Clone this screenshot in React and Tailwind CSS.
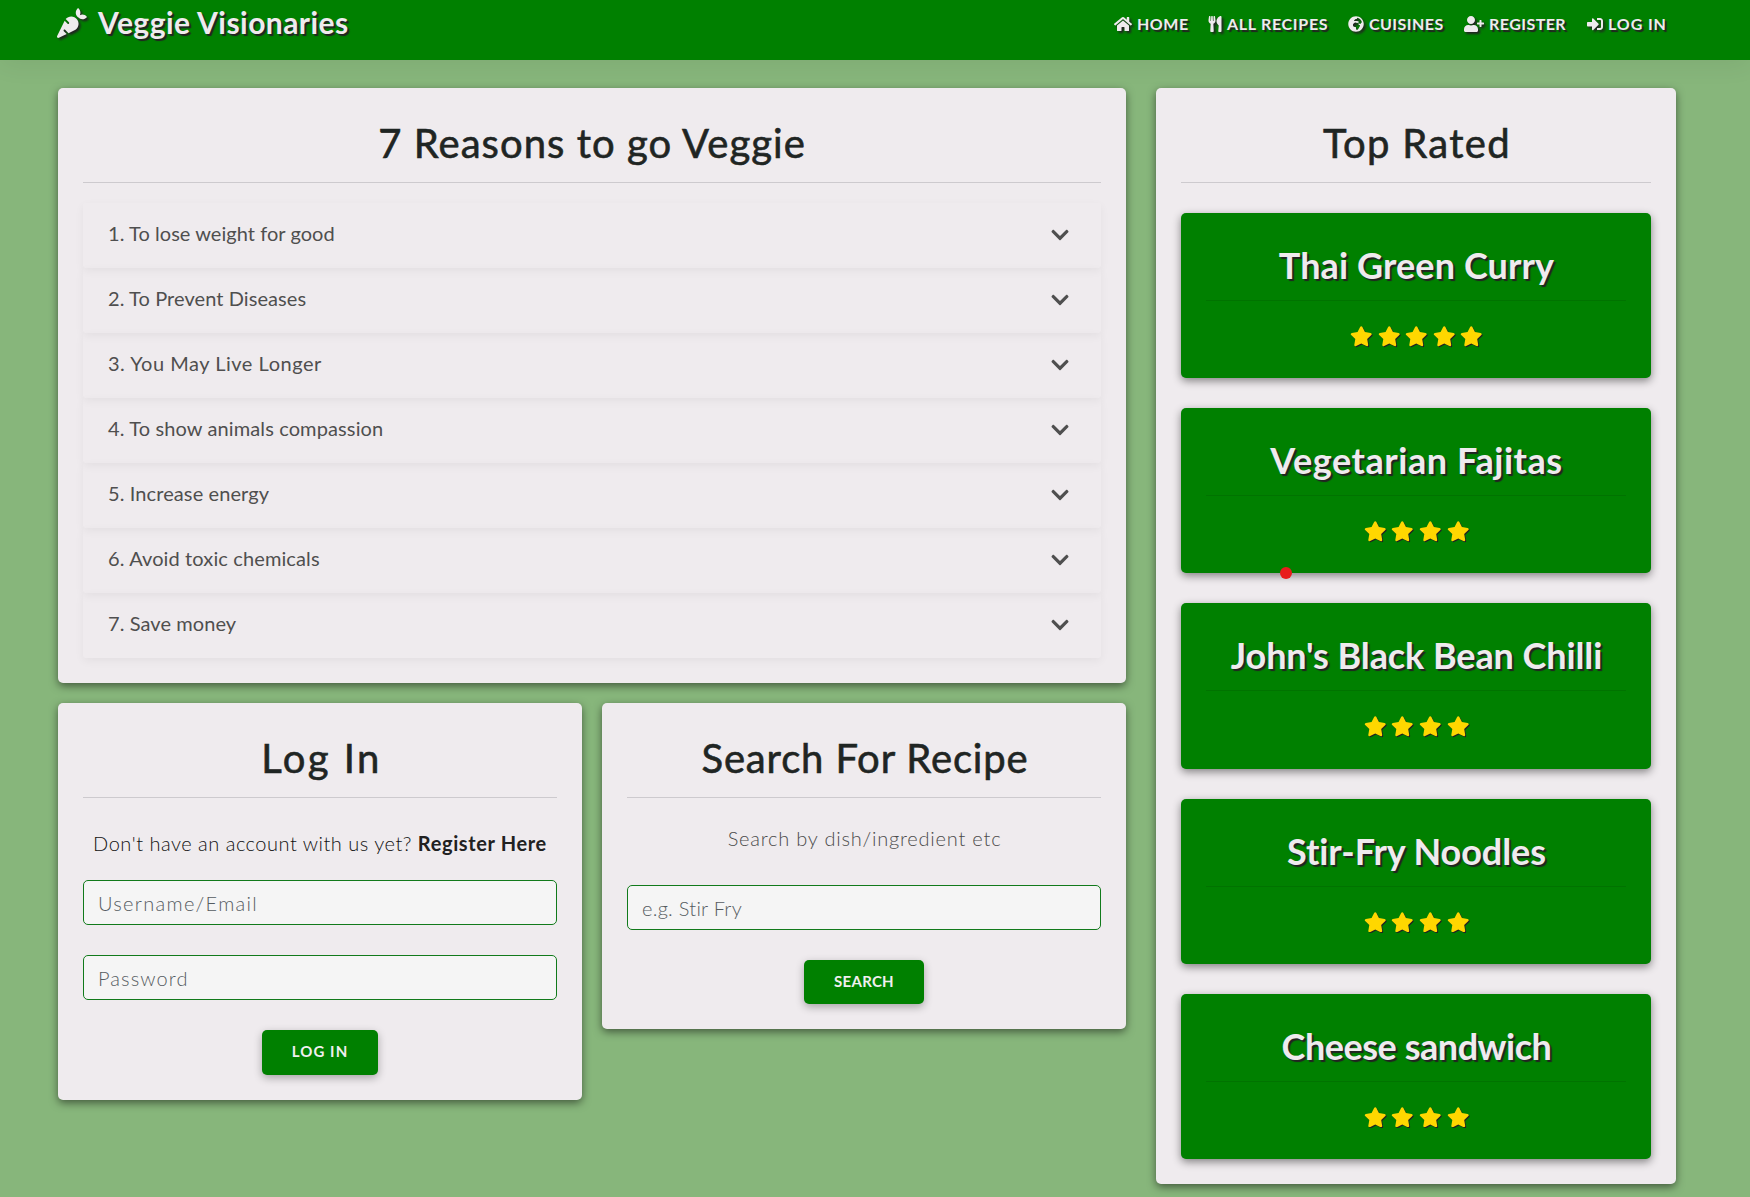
import React from "react";
import {
  FaCarrot,
  FaHome,
  FaUtensils,
  FaGlobeAfrica,
  FaUserPlus,
  FaSignInAlt,
  FaChevronDown,
  FaStar,
} from "react-icons/fa";

const navItems = [
  { label: "HOME", Icon: FaHome, icon: "w-[18px]", spacing: "tracking-[0.5px]" },
  { label: "ALL RECIPES", Icon: FaUtensils, icon: "w-[14px]", spacing: "tracking-[0.7px]" },
  { label: "CUISINES", Icon: FaGlobeAfrica, icon: "w-4", spacing: "tracking-[0.45px]" },
  { label: "REGISTER", Icon: FaUserPlus, icon: "w-5", spacing: "tracking-[0.45px]" },
  { label: "LOG IN", Icon: FaSignInAlt, icon: "w-4", spacing: "tracking-[0.9px]" },
];

const reasons = [
  { text: "1. To lose weight for good", spacing: "tracking-[0.05px]" },
  { text: "2. To Prevent Diseases", spacing: "tracking-[0.08px]" },
  { text: "3. You May Live Longer", spacing: "tracking-[0.52px]" },
  { text: "4. To show animals compassion", spacing: "tracking-[0.12px]" },
  { text: "5. Increase energy", spacing: "tracking-[0.1px]" },
  { text: "6. Avoid toxic chemicals", spacing: "tracking-[0.12px]" },
  { text: "7. Save money", spacing: "tracking-[0.08px]" },
];

const topRated = [
  { name: "Thai Green Curry", stars: 5, spacing: "tracking-[0.1px]" },
  { name: "Vegetarian Fajitas", stars: 4, spacing: "tracking-[0.54px]" },
  { name: "John's Black Bean Chilli", stars: 4, spacing: "tracking-[-0.09px]" },
  { name: "Stir-Fry Noodles", stars: 4, spacing: "tracking-[-0.08px]" },
  { name: "Cheese sandwich", stars: 4, spacing: "tracking-[-0.47px]" },
];

function Card({ className = "", children }) {
  return (
    <section
      className={`rounded-[5px] bg-[#efebee] px-[25px] pt-[35px] pb-[25px] shadow-[0_3px_9px_rgba(0,0,0,0.5)] ${className}`}
    >
      {children}
    </section>
  );
}

function CardTitle({ className = "", children }) {
  return (
    <h2
      className={`border-b border-[#cdcace] text-center text-[40px] leading-[41px] font-normal whitespace-nowrap text-[#1f2523] [-webkit-text-stroke:0.6px_#1f2523] ${className}`}
    >
      {children}
    </h2>
  );
}

function Field({ className = "", ...props }) {
  return (
    <input
      className={`block h-[45px] w-full rounded-[5px] border border-[#117a1b] bg-[#f5f5f5] px-[14px] text-[20px] font-light placeholder-[#555c61] outline-none ${className}`}
      {...props}
    />
  );
}

function Button({ className = "", children }) {
  return (
    <button
      className={`mx-auto block rounded-[5px] bg-[#008000] pb-[2px] text-[15px] font-bold text-[#f0efef] shadow-[0_3px_8px_rgba(0,0,0,0.3)] ${className}`}
    >
      {children}
    </button>
  );
}

export default function App() {
  return (
    <div className="relative h-[1197px] w-[1750px] overflow-hidden bg-[#87b67b] font-['Lato','Liberation_Sans',sans-serif]">
      <header className="flex h-[60px] items-start justify-between bg-[#008000] pl-[57px] text-[#efebee] shadow-[0_6px_25px_rgba(0,0,0,0.06)]">
        <a className="flex h-[45px] items-center gap-[11px] whitespace-nowrap">
          <FaCarrot className="size-[30px] drop-shadow-[2px_2px_1px_#222]" />
          <span className="text-[30px] leading-[45px] font-bold tracking-[0.45px] text-shadow-[2px_2px_1px_#222]">
            Veggie Visionaries
          </span>
        </a>
        <nav className="grid h-[47px] w-[636px] grid-cols-[94px_140px_116px_123px_auto] items-center">
          {navItems.map(({ label, Icon, icon, spacing }) => (
            <a key={label} className="flex items-center gap-[5px] whitespace-nowrap">
              <Icon className={`h-4 shrink-0 drop-shadow-[2px_2px_1px_#222] ${icon}`} />
              <span className={`text-[16px] leading-[47px] font-bold text-shadow-[2px_2px_1px_#222] ${spacing}`}>
                {label}
              </span>
            </a>
          ))}
        </nav>
      </header>

      <main className="flex items-start gap-[30px] pt-7 pl-[58px]">
        <div className="w-[1068px]">
          <Card>
            <CardTitle className="pb-[18px] tracking-[1.05px]">7 Reasons to go Veggie</CardTitle>
            <ul className="mt-5">
              {reasons.map(({ text, spacing }) => (
                <li
                  key={text}
                  className="flex h-[65px] items-center justify-between rounded-[3px] pr-[31px] pl-[25px] text-[#4f4f4f] shadow-[0_3px_10px_rgba(0,0,0,0.05)]"
                >
                  <span className={`pb-[6px] text-[20px] ${spacing}`}>{text}</span>
                  <FaChevronDown className="mb-[2px] size-5" />
                </li>
              ))}
            </ul>
          </Card>

          <div className="mt-5 flex items-start gap-5">
            <Card className="w-[524px]">
              <CardTitle className="pb-[18px] pl-[3px] tracking-[2.4px]">Log In</CardTitle>
              <p className="mt-[30px] text-center text-[20px] leading-[30px] font-light tracking-[0.5px] whitespace-nowrap text-[#111]">
                Don't have an account with us yet?{" "}
                <a className="font-bold tracking-[0.63px] text-[#212121]">Register Here</a>
              </p>
              <Field className="mt-[22px] placeholder:tracking-[1.3px]" placeholder="Username/Email" />
              <Field className="mt-[30px] placeholder:tracking-[1.1px]" placeholder="Password" type="password" />
              <Button className="mt-[30px] h-[45px] w-[116px] tracking-[1.1px]">LOG IN</Button>
            </Card>

            <Card className="w-[524px]">
              <CardTitle className="pb-[18px] pl-[2px] tracking-[0.85px]">Search For Recipe</CardTitle>
              <p className="mt-[25px] pl-[1px] text-center text-[20px] leading-[30px] font-light tracking-[0.79px] text-[#4c4c4c]">
                Search by dish/ingredient etc
              </p>
              <Field className="mt-8 placeholder:tracking-[0.27px]" placeholder="e.g. Stir Fry" />
              <Button className="mt-[30px] h-11 w-[120px] tracking-[0.26px]">SEARCH</Button>
            </Card>
          </div>
        </div>

        <Card className="w-[520px]">
          <CardTitle className="pb-[18px] pl-[2px] tracking-[1.3px]">Top Rated</CardTitle>
          <div className="mt-[30px] flex flex-col gap-[30px]">
            {topRated.map(({ name, stars, spacing }) => (
              <article
                key={name}
                className="h-[165.2px] rounded-[5px] bg-[#008000] px-[25px] pt-[34px] text-center shadow-[0_3px_9px_rgba(0,0,0,0.45)]"
              >
                <h3
                  className={`pl-[1px] text-[36px] leading-[36px] font-bold whitespace-nowrap text-[#efebee] text-shadow-[2px_2px_1px_#222] ${spacing}`}
                >
                  {name}
                </h3>
                <hr className="mt-[17px] border-black/10" />
                <div className="mt-[25px] flex justify-center gap-[5.1px] pl-[1px] text-[#ffd700]">
                  {Array.from({ length: stars }, (_, i) => (
                    <FaStar key={i} className="h-[20.5px] w-[22.5px] drop-shadow-[1px_1px_0.5px_#222]" />
                  ))}
                </div>
              </article>
            ))}
          </div>
        </Card>
      </main>

      <span className="absolute top-[567px] left-[1280px] size-3 rounded-full bg-[#e81c1c]" />
    </div>
  );
}
